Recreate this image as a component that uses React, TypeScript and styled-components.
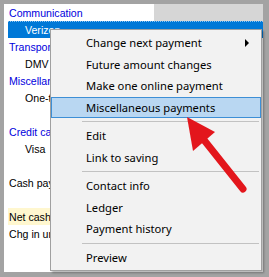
import React from 'react';
import styled, { createGlobalStyle } from 'styled-components';

const Global = createGlobalStyle`
  html, body { margin: 0; padding: 0; background: #a3a3a3; }
  body {
    width: 269px; height: 277px; overflow: hidden;
    font-family: "Noto Sans", "Open Sans", sans-serif;
  }
`;

const Frame = styled.div`
  position: relative;
  width: 269px;
  height: 277px;
  box-sizing: border-box;
  padding: 4px 6px 5px 4px;
  background: #a3a3a3;
`;

const Panel = styled.div`
  height: 100%;
  background: #fff;
  display: flex;
  flex-direction: column;
`;

type RowKind = 'category' | 'item' | 'plain';

const Row = styled.div<{ $selected?: boolean }>`
  height: 17px;
  margin-left: 4px;
  display: flex;
  align-items: stretch;
  box-sizing: border-box;
  background: ${p => (p.$selected ? '#0078d7' : 'transparent')};
  border-top: ${p => (p.$selected ? '1px dotted #8fc3ef' : 'none')};
`;

const Label = styled.div<{ $kind: RowKind; $selected?: boolean; $note?: boolean }>`
  width: 146px;
  flex: none;
  display: flex;
  align-items: center;
  box-sizing: border-box;
  padding-left: ${p => (p.$kind === 'item' ? '17px' : '1px')};
  font-family: "Liberation Sans", Arial, sans-serif;
  font-size: 10.6px;
  white-space: nowrap;
  color: ${p => (p.$selected ? '#fff' : p.$kind === 'category' ? '#0000dd' : '#000')};
  background: ${p => (p.$note ? '#fff7cf' : 'transparent')};
`;

const HeaderFill = styled.div`
  flex: 1;
  background: #d6d6d6;
`;

const Menu = styled.div`
  position: absolute;
  left: 50px;
  top: 29px;
  width: 212px;
  box-sizing: border-box;
  border: 1px solid #a0a0a0;
  background: #f2f2f2;
  padding: 2px 0;
  box-shadow: 2px 2px 2px rgba(0, 0, 0, 0.28);
  font-size: 11.2px;
  color: #000;
`;

const MenuItem = styled.div<{ $active?: boolean }>`
  position: relative;
  height: 21.5px;
  box-sizing: border-box;
  display: flex;
  align-items: center;
  padding-left: 34px;
  border: 1px solid ${p => (p.$active ? '#3d8fd6' : 'transparent')};
  background: ${p => (p.$active ? '#b9d7f2' : 'transparent')};
  white-space: nowrap;
`;

const SubArrow = styled.span`
  position: absolute;
  right: 11px;
  top: 50%;
  margin-top: -4px;
  width: 0;
  height: 0;
  border-left: 4px solid #000;
  border-top: 4px solid transparent;
  border-bottom: 4px solid transparent;
`;

const Separator = styled.div`
  height: 7px;
  display: flex;
  align-items: center;
  padding: 0 2px 0 31px;
  &::after {
    content: '';
    flex: 1;
    height: 1px;
    background: #c2c2c2;
  }
`;

const Overlay = styled.svg`
  position: absolute;
  left: 0;
  top: 0;
  pointer-events: none;
`;

const rows: { text: string; kind: RowKind; selected?: boolean; note?: boolean; header?: boolean }[] = [
  { text: 'Communication', kind: 'category', header: true },
  { text: 'Verizon', kind: 'item', selected: true },
  { text: 'Transportation', kind: 'category' },
  { text: 'DMV', kind: 'item' },
  { text: 'Miscellaneous', kind: 'category' },
  { text: 'One-time', kind: 'item' },
  { text: '', kind: 'plain' },
  { text: 'Credit cards', kind: 'category' },
  { text: 'Visa', kind: 'item' },
  { text: '', kind: 'plain' },
  { text: 'Cash payments', kind: 'plain' },
  { text: '', kind: 'plain' },
  { text: 'Net cash flow', kind: 'plain', note: true },
  { text: 'Chg in uncleared', kind: 'plain' },
];

type Entry = { label: string; sub?: boolean; active?: boolean } | 'sep';

const menu: Entry[] = [
  { label: 'Change next payment', sub: true },
  { label: 'Future amount changes' },
  { label: 'Make one online payment' },
  { label: 'Miscellaneous payments', active: true },
  'sep',
  { label: 'Edit' },
  { label: 'Link to saving' },
  'sep',
  { label: 'Contact info' },
  { label: 'Ledger' },
  { label: 'Payment history' },
  'sep',
  { label: 'Preview' },
];

export default function App() {
  return (
    <>
      <Global />
      <Frame>
        <Panel>
          {rows.map((r, i) => (
            <Row key={i} $selected={r.selected}>
              <Label $kind={r.kind} $selected={r.selected} $note={r.note}>
                {r.text}
              </Label>
              {r.header && <HeaderFill />}
            </Row>
          ))}
        </Panel>
        <Menu>
          {menu.map((m, i) =>
            m === 'sep' ? (
              <Separator key={i} />
            ) : (
              <MenuItem key={i} $active={m.active}>
                {m.label}
                {m.sub && <SubArrow />}
              </MenuItem>
            )
          )}
        </Menu>
        <Overlay width="269" height="277" viewBox="0 0 269 277">
          <line x1="204" y1="140" x2="243" y2="189" stroke="#e3161c" strokeWidth="7" strokeLinecap="round" />
          <polygon points="187,117 215,132 193,151" fill="#e3161c" />
        </Overlay>
      </Frame>
    </>
  );
}
